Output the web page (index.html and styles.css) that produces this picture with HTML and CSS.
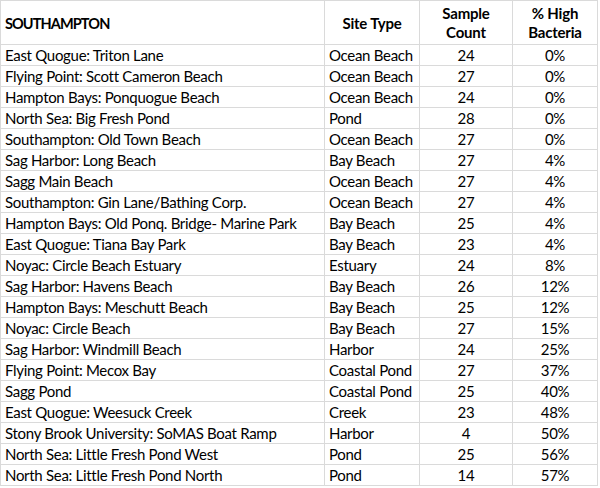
FILE: index.html
```html
<!DOCTYPE html>
<html>
<head>
<meta charset="utf-8">
<link rel="stylesheet" href="styles.css">
</head>
<body>
<div class="sheet">
  <div class="cell head title">SOUTHAMPTON</div>
  <div class="cell head center">Site Type</div>
  <div class="cell head center">Sample<br>Count</div>
  <div class="cell head center">% High<br>Bacteria</div>

  <div class="cell">East Quogue: Triton Lane</div><div class="cell">Ocean Beach</div><div class="cell num">24</div><div class="cell num">0%</div>
  <div class="cell">Flying Point: Scott Cameron Beach</div><div class="cell">Ocean Beach</div><div class="cell num">27</div><div class="cell num">0%</div>
  <div class="cell">Hampton Bays: Ponquogue Beach</div><div class="cell">Ocean Beach</div><div class="cell num">24</div><div class="cell num">0%</div>
  <div class="cell">North Sea: Big Fresh Pond</div><div class="cell">Pond</div><div class="cell num">28</div><div class="cell num">0%</div>
  <div class="cell">Southampton: Old Town Beach</div><div class="cell">Ocean Beach</div><div class="cell num">27</div><div class="cell num">0%</div>
  <div class="cell">Sag Harbor: Long Beach</div><div class="cell">Bay Beach</div><div class="cell num">27</div><div class="cell num">4%</div>
  <div class="cell">Sagg Main Beach</div><div class="cell">Ocean Beach</div><div class="cell num">27</div><div class="cell num">4%</div>
  <div class="cell">Southampton: Gin Lane/Bathing Corp.</div><div class="cell">Ocean Beach</div><div class="cell num">27</div><div class="cell num">4%</div>
  <div class="cell">Hampton Bays: Old Ponq. Bridge- Marine Park</div><div class="cell">Bay Beach</div><div class="cell num">25</div><div class="cell num">4%</div>
  <div class="cell">East Quogue: Tiana Bay Park</div><div class="cell">Bay Beach</div><div class="cell num">23</div><div class="cell num">4%</div>
  <div class="cell">Noyac: Circle Beach Estuary</div><div class="cell">Estuary</div><div class="cell num">24</div><div class="cell num">8%</div>
  <div class="cell">Sag Harbor: Havens Beach</div><div class="cell">Bay Beach</div><div class="cell num">26</div><div class="cell num">12%</div>
  <div class="cell">Hampton Bays: Meschutt Beach</div><div class="cell">Bay Beach</div><div class="cell num">25</div><div class="cell num">12%</div>
  <div class="cell">Noyac: Circle Beach</div><div class="cell">Bay Beach</div><div class="cell num">27</div><div class="cell num">15%</div>
  <div class="cell">Sag Harbor: Windmill Beach</div><div class="cell">Harbor</div><div class="cell num">24</div><div class="cell num">25%</div>
  <div class="cell">Flying Point: Mecox Bay</div><div class="cell">Coastal Pond</div><div class="cell num">27</div><div class="cell num">37%</div>
  <div class="cell">Sagg Pond</div><div class="cell">Coastal Pond</div><div class="cell num">25</div><div class="cell num">40%</div>
  <div class="cell">East Quogue: Weesuck Creek</div><div class="cell">Creek</div><div class="cell num">23</div><div class="cell num">48%</div>
  <div class="cell">Stony Brook University: SoMAS Boat Ramp</div><div class="cell">Harbor</div><div class="cell num">4</div><div class="cell num">50%</div>
  <div class="cell">North Sea: Little Fresh Pond West</div><div class="cell">Pond</div><div class="cell num">25</div><div class="cell num">56%</div>
  <div class="cell">North Sea: Little Fresh Pond North</div><div class="cell">Pond</div><div class="cell num">14</div><div class="cell num">57%</div>
</div>
</body>
</html>
```
FILE: styles.css
```css
html, body {
  margin: 0;
  padding: 0;
  background: #ffffff;
}
body {
  font-family: "Lato", "Liberation Sans", sans-serif;
  font-size: 15px;
  color: #000;
}
.sheet {
  display: grid;
  grid-template-columns: 324px 95px 93px 85px;
  grid-template-rows: 44px repeat(21, 21px);
  width: 597px;
  border-right: 1px solid #dadada;
  border-bottom: 1px solid #dadada;
}
.cell {
  box-sizing: border-box;
  border-left: 1px solid #dadada;
  border-top: 1px solid #dadada;
  padding: 0 0 0 4px;
  line-height: 20px;
  letter-spacing: -0.3px;
  white-space: nowrap;
  overflow: hidden;
  display: flex;
  align-items: center;
}
.head {
  font-weight: bold;
  line-height: 19px;
  letter-spacing: -0.2px;
  padding-top: 1px;
}
.title {
  letter-spacing: -0.9px;
  font-size: 14.5px;
}
.center {
  justify-content: center;
  text-align: center;
  padding-left: 0;
}
.num {
  justify-content: center;
  padding: 0;
}
```
